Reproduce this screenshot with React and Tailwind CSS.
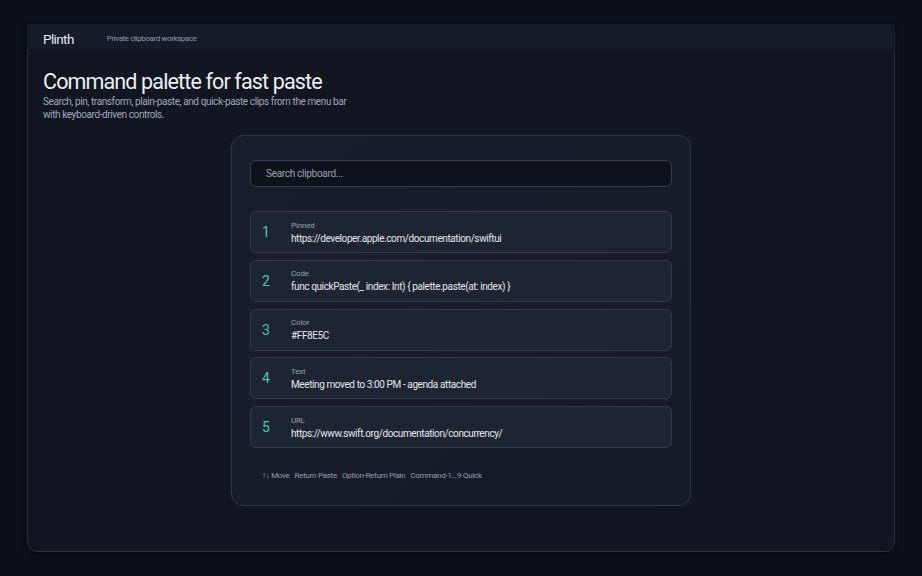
import React from "react";

const clips = [
  { n: 1, kind: "Pinned", text: "https://developer.apple.com/documentation/swiftui" },
  { n: 2, kind: "Code", text: "func quickPaste(_ index: Int) { palette.paste(at: index) }" },
  { n: 3, kind: "Color", text: "#FF8E5C" },
  { n: 4, kind: "Text", text: "Meeting moved to 3:00 PM - agenda attached" },
  { n: 5, kind: "URL", text: "https://www.swift.org/documentation/concurrency/" },
];

const hints = ["↑↓ Move", "Return Paste", "Option-Return Plain", "Command-1...9 Quick"];

export default function App() {
  return (
    <div
      className="min-h-[576px] w-full bg-[#0c1019] px-[27px] py-6"
      style={{ fontFamily: "Roboto, 'Noto Sans', sans-serif" }}
    >
      <div className="flex h-[528px] flex-col rounded-[10px] border border-[#2a3140] bg-[#111621] shadow-[0_2px_6px_rgba(0,0,0,0.4)]">
        <header className="-mx-px -mt-px flex h-[25px] items-start bg-[#151b27] px-[16px]">
          <span className="mt-[8.5px] text-[13.5px] leading-none tracking-[-0.045em] text-[#e6e9ef]">Plinth</span>
          <span className="ml-[33px] mt-[11px] text-[8px] leading-none tracking-[-0.05em] text-[#9199a8]">
            Private clipboard workspace
          </span>
        </header>

        <div className="px-[15px] pt-[20px]">
          <h1 className="text-[21.5px] leading-[26px] tracking-[-0.04em] text-[#eceff4]">
            Command palette for fast paste
          </h1>
          <p className="max-w-[315px] text-[10px] leading-[13px] tracking-[-0.04em] text-[#a0a8b6]">
            Search, pin, transform, plain-paste, and quick-paste clips from the menu bar with keyboard-driven controls.
          </p>
        </div>

        <div className="mx-auto mt-[14px] flex w-[460px] flex-col rounded-[12px] border border-[#2e3646] bg-gradient-to-br from-[#181e2b] to-[#151b26] px-[18px] pt-6 pb-[23px]">
          <div className="flex h-[27px] items-center rounded-[6px] border border-[#363e4d] bg-[#0e121b] px-[15px] text-[10px] tracking-[-0.03em] text-[#9aa2b1]">
            Search clipboard...
          </div>

          <div className="mt-6 flex flex-col gap-[6.75px]">
            {clips.map((c) => (
              <div
                key={c.n}
                className="flex h-[42px] items-center rounded-[6px] border border-[#333b4a] bg-[#1e2532]"
              >
                <span className="w-[40px] pl-[11px] text-[14px] leading-none text-[#4cc4ae]">{c.n}</span>
                <div className="flex flex-col">
                  <span className="text-[8px] leading-[11px] tracking-[-0.02em] text-[#9aa2b1]">{c.kind}</span>
                  <span className="mt-[1px] text-[10px] leading-[13px] tracking-[-0.04em] text-[#e4e7ec]">
                    {c.text}
                  </span>
                </div>
              </div>
            ))}
          </div>

          <div className="mt-[22px] flex gap-[5px] pl-[12px] text-[8px] leading-[12px] tracking-[-0.035em] text-[#959dab]">
            {hints.map((h) => (
              <span key={h}>{h}</span>
            ))}
          </div>
        </div>
      </div>
    </div>
  );
}
